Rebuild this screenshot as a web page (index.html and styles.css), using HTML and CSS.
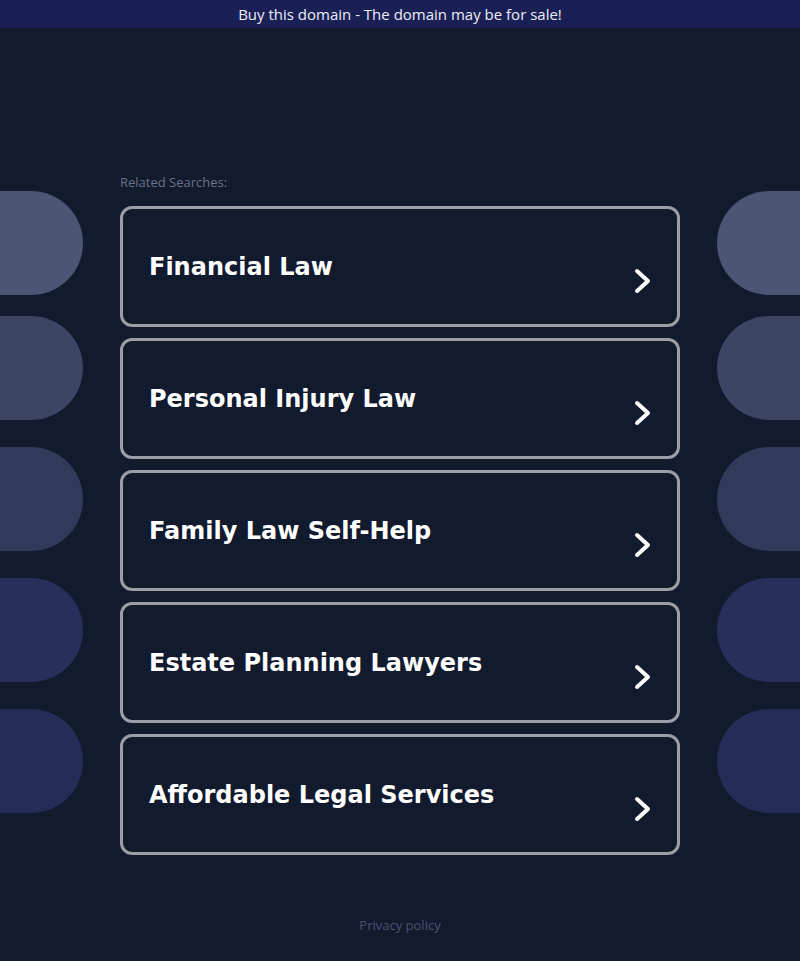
FILE: index.html
```html
<!DOCTYPE html>
<html>
<head>
    <meta charset="UTF-8">
    <title>Related Searches</title>
    <link rel="stylesheet" href="styles.css">
</head>
<body>
    <div class="topbar">Buy this domain - The domain may be for sale!</div>

    <div class="page">
        <div class="side side-left">
            <div class="pill p1"></div>
            <div class="pill p2"></div>
            <div class="pill p3"></div>
            <div class="pill p4"></div>
            <div class="pill p5"></div>
        </div>

        <div class="main">
            <div class="label">Related Searches:</div>
            <div class="links">
                <a class="link" href="#"><span>Financial Law</span><svg class="arrow" viewBox="0 0 20 28"><path d="M4 4 L15 14 L4 24"/></svg></a>
                <a class="link" href="#"><span>Personal Injury Law</span><svg class="arrow" viewBox="0 0 20 28"><path d="M4 4 L15 14 L4 24"/></svg></a>
                <a class="link" href="#"><span>Family Law Self-Help</span><svg class="arrow" viewBox="0 0 20 28"><path d="M4 4 L15 14 L4 24"/></svg></a>
                <a class="link" href="#"><span>Estate Planning Lawyers</span><svg class="arrow" viewBox="0 0 20 28"><path d="M4 4 L15 14 L4 24"/></svg></a>
                <a class="link" href="#"><span>Affordable Legal Services</span><svg class="arrow" viewBox="0 0 20 28"><path d="M4 4 L15 14 L4 24"/></svg></a>
            </div>
        </div>

        <div class="side side-right">
            <div class="pill p1"></div>
            <div class="pill p2"></div>
            <div class="pill p3"></div>
            <div class="pill p4"></div>
            <div class="pill p5"></div>
        </div>
    </div>

    <div class="footer"><a href="#">Privacy policy</a></div>
</body>
</html>
```

FILE: styles.css
```css
* {
    box-sizing: border-box;
    margin: 0;
    padding: 0;
}

body {
    background-color: #121a2e;
    font-family: "Open Sans", Arial, sans-serif;
    min-height: 961px;
}

.topbar {
    height: 28px;
    line-height: 28px;
    background-color: #1a1f56;
    color: #eceef6;
    font-size: 15px;
    text-align: center;
}

.page {
    display: grid;
    grid-template-columns: 83px 1fr 560px 1fr 83px;
}

.main {
    grid-column: 3;
    padding-top: 145px;
}

.side-left {
    grid-column: 1;
}

.side-right {
    grid-column: 5;
}

.side {
    padding-top: 163px;
}

/* decorative rounded blocks beside the list */
.pill {
    height: 104px;
    margin-top: 27px;
}

.side .p1 {
    margin-top: 0;
}

.side .p2 {
    margin-top: 21px;
}

.side-left .pill {
    border-radius: 0 52px 52px 0;
}

.side-right .pill {
    border-radius: 52px 0 0 52px;
}

.p1 { background-color: #4b5574; }
.p2 { background-color: #3c4563; }
.p3 { background-color: #303a5a; }
.p4 { background-color: #26305a; }
.p5 { background-color: #232d56; }

.label {
    color: #6b7389;
    font-size: 13px;
    height: 18px;
    line-height: 18px;
    margin-bottom: 15px;
}

.links {
    display: flex;
    flex-direction: column;
    gap: 11px;
}

.link {
    display: flex;
    align-items: center;
    height: 121px;
    border: 3px solid #9c9ea5;
    border-radius: 12px;
    padding: 0 24px 0 26px;
    color: #ffffff;
    text-decoration: none;
    font-family: "DejaVu Sans", sans-serif;
    font-weight: bold;
    font-size: 24px;
}

.link span {
    flex: 1;
}

.arrow {
    width: 20px;
    height: 28px;
    margin-top: 28px;
    fill: none;
    stroke: #ffffff;
    stroke-width: 4;
    stroke-linecap: round;
    stroke-linejoin: round;
}

.footer {
    text-align: center;
    padding-top: 58px;
}

.footer a {
    color: #4b5270;
    font-size: 13px;
    text-decoration: none;
}
```
